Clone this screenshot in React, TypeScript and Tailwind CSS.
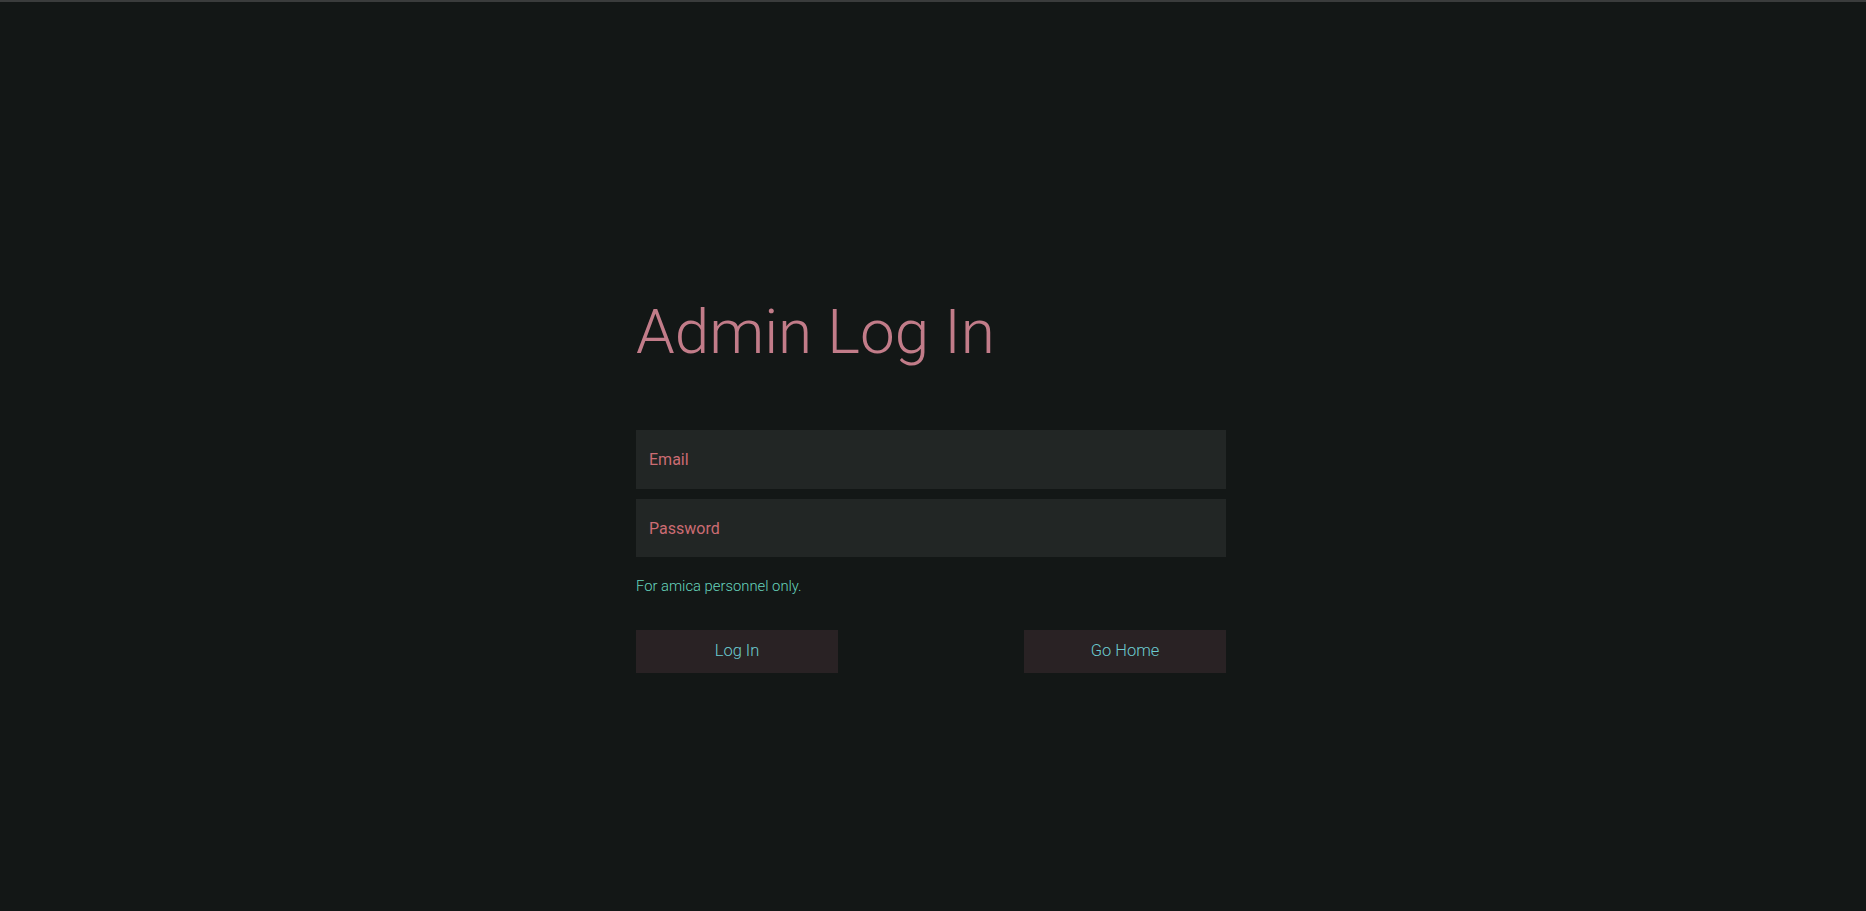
export default function App() {
  return (
    <div
      className="min-h-screen bg-[#131716] border-t-2 border-[#3a3c3c]"
      style={{ fontFamily: "Roboto, 'Noto Sans', sans-serif" }}
    >
      <div className="ml-[calc(50%-297px)] w-[590px] pt-[299px] pb-20">
        <h1 className="text-[62px] font-light leading-none text-[#c27c89]">
          Admin Log In
        </h1>

        <form className="mt-[67px] flex flex-col gap-[10px]">
          <input
            type="email"
            placeholder="Email"
            className="h-[59px] w-full bg-[#222625] pl-[13px] text-base text-[#cc6c73] placeholder:text-[#cc6c73] outline-none"
          />
          <input
            type="password"
            placeholder="Password"
            className="h-[58px] w-full bg-[#222625] pl-[13px] text-base text-[#cc6c73] placeholder:text-[#cc6c73] outline-none"
          />
        </form>

        <p className="mt-[19px] text-[14.8px] leading-5 font-light text-[#66d4bd]">
          For amica personnel only.
        </p>

        <div className="mt-[34px] flex justify-between">
          <button className="h-[43px] w-[202px] bg-[#292224] text-[16.5px] font-light text-[#6ccbd0]">
            Log In
          </button>
          <button className="h-[43px] w-[202px] bg-[#292224] text-[16.5px] font-light text-[#6ccbd0]">
            Go Home
          </button>
        </div>
      </div>
    </div>
  );
}
